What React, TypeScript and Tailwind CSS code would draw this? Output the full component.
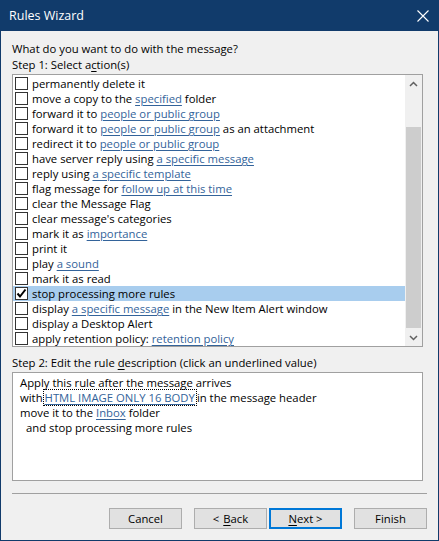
import React from "react";

type Part = { t: string; link?: boolean };
type Row = { parts: Part[]; checked?: boolean; selected?: boolean };

const rows: Row[] = [
  { parts: [{ t: "permanently delete it" }] },
  { parts: [{ t: "move a copy to the " }, { t: "specified", link: true }, { t: " folder" }] },
  { parts: [{ t: "forward it to " }, { t: "people or public group", link: true }] },
  { parts: [{ t: "forward it to " }, { t: "people or public group", link: true }, { t: " as an attachment" }] },
  { parts: [{ t: "redirect it to " }, { t: "people or public group", link: true }] },
  { parts: [{ t: "have server reply using " }, { t: "a specific message", link: true }] },
  { parts: [{ t: "reply using " }, { t: "a specific template", link: true }] },
  { parts: [{ t: "flag message for " }, { t: "follow up at this time", link: true }] },
  { parts: [{ t: "clear the Message Flag" }] },
  { parts: [{ t: "clear message's categories" }] },
  { parts: [{ t: "mark it as " }, { t: "importance", link: true }] },
  { parts: [{ t: "print it" }] },
  { parts: [{ t: "play " }, { t: "a sound", link: true }] },
  { parts: [{ t: "mark it as read" }] },
  { parts: [{ t: "stop processing more rules" }], checked: true, selected: true },
  { parts: [{ t: "display " }, { t: "a specific message", link: true }, { t: " in the New Item Alert window" }] },
  { parts: [{ t: "display a Desktop Alert" }] },
  { parts: [{ t: "apply retention policy: " }, { t: "retention policy", link: true }] },
];

const font = { fontFamily: '"Open Sans", "Noto Sans", sans-serif' };

function Link({ children }: { children: React.ReactNode }) {
  return (
    <span className="text-[#33639a] underline underline-offset-2 decoration-[#33639a] whitespace-pre">{children}</span>
  );
}

function Checkbox({ checked }: { checked?: boolean }) {
  return (
    <span className="w-[13px] h-[13px] shrink-0 border border-[#333333] bg-white flex items-center justify-center">
      {checked && (
        <svg width="11" height="11" viewBox="0 0 11 11">
          <path d="M1.5 5.5 L4 8.5 L9.5 1.5" stroke="#000" strokeWidth="2" fill="none" />
        </svg>
      )}
    </span>
  );
}

function Btn({ children, focused }: { children: React.ReactNode; focused?: boolean }) {
  return (
    <div
      className={
        "w-[73px] h-[21px] flex items-center justify-center bg-[#e1e1e1] text-black " +
        (focused ? "border-2 border-[#0078d7]" : "border border-[#adadad]")
      }
    >
      {children}
    </div>
  );
}

export default function App() {
  return (
    <div
      className="w-[439px] h-[541px] bg-[#f0f0f0] border-l border-r border-b border-[#113b6b] flex flex-col text-[11.3px] leading-[16px] text-black"
      style={font}
    >
      <div className="h-[31px] bg-[#113b6b] flex items-center justify-between pl-[8px] pr-[9px] text-white text-[12.5px]">
        <span>Rules Wizard</span>
        <svg width="12" height="12" viewBox="0 0 12 12">
          <path d="M0.5 0.5 L11.5 11.5 M11.5 0.5 L0.5 11.5" stroke="#ffffff" strokeWidth="1.1" />
        </svg>
      </div>
      <div className="flex flex-col pl-[11px] pt-[10px] w-[426px]">
        <div>What do you want to do with the message?</div>
        <div>
          Step 1: Select a<span className="underline underline-offset-2">c</span>tion(s)
        </div>
        <div className="mt-[1px] w-[411px] h-[273px] border border-[#a0a0a0] bg-white flex overflow-hidden">
          <div className="flex-1 flex flex-col pt-[1px]">
            {rows.map((r, i) => (
              <div
                key={i}
                className={
                  "h-[15px] flex items-center pl-[2px] gap-[4px] whitespace-nowrap leading-[15px] " +
                  (r.selected ? "bg-[#a8cdee]" : "")
                }
              >
                <Checkbox checked={r.checked} />
                <span>
                  {r.parts.map((p, j) =>
                    p.link ? <Link key={j}>{p.t}</Link> : <span key={j} className="whitespace-pre">{p.t}</span>
                  )}
                </span>
              </div>
            ))}
          </div>
          <div className="w-[17px] shrink-0 bg-[#f0f0f0] flex flex-col">
            <div className="h-[17px] flex items-center justify-center">
              <svg width="9" height="6" viewBox="0 0 9 6">
                <path d="M1 5 L4.5 1.5 L8 5" stroke="#606060" strokeWidth="1.5" fill="none" />
              </svg>
            </div>
            <div className="h-[35px]" />
            <div className="h-[201px] mx-[1px] bg-[#cdcdcd]" />
            <div className="flex-1" />
            <div className="h-[17px] flex items-center justify-center">
              <svg width="9" height="6" viewBox="0 0 9 6">
                <path d="M1 1 L4.5 4.5 L8 1" stroke="#606060" strokeWidth="1.5" fill="none" />
              </svg>
            </div>
          </div>
        </div>
        <div className="mt-[8px]">
          Step 2: Edit the rule <span className="underline underline-offset-2">d</span>escription (click an underlined value)
        </div>
        <div className="mt-[1px] w-[411px] h-[109px] border border-[#a0a0a0] bg-white pt-[2px] pl-[7px] leading-[15px] whitespace-nowrap">
          <div>Apply this rule after the message arrives</div>
          <div>
            with
            <span className="outline outline-1 outline-dotted outline-black px-[1px] mx-[1px]">
              <Link>HTML IMAGE ONLY 16 BODY</Link>
            </span>
            in the message header
          </div>
          <div>
            move it to the <Link>Inbox</Link> folder
          </div>
          <div className="pl-[6px]">and stop processing more rules</div>
        </div>
        <div className="mt-[12px] w-[415px] h-[1px] bg-[#a0a0a0]" />
        <div className="mt-[14px] w-[415px] flex justify-end">
          <Btn>Cancel</Btn>
          <div className="w-[12px]" />
          <Btn>
            &lt; <span className="underline underline-offset-2 ml-[4px]">B</span>ack
          </Btn>
          <div className="w-[2px]" />
          <Btn focused>
            <span className="underline underline-offset-2">N</span>ext &gt;
          </Btn>
          <div className="w-[12px]" />
          <Btn>Finish</Btn>
        </div>
      </div>
    </div>
  );
}
